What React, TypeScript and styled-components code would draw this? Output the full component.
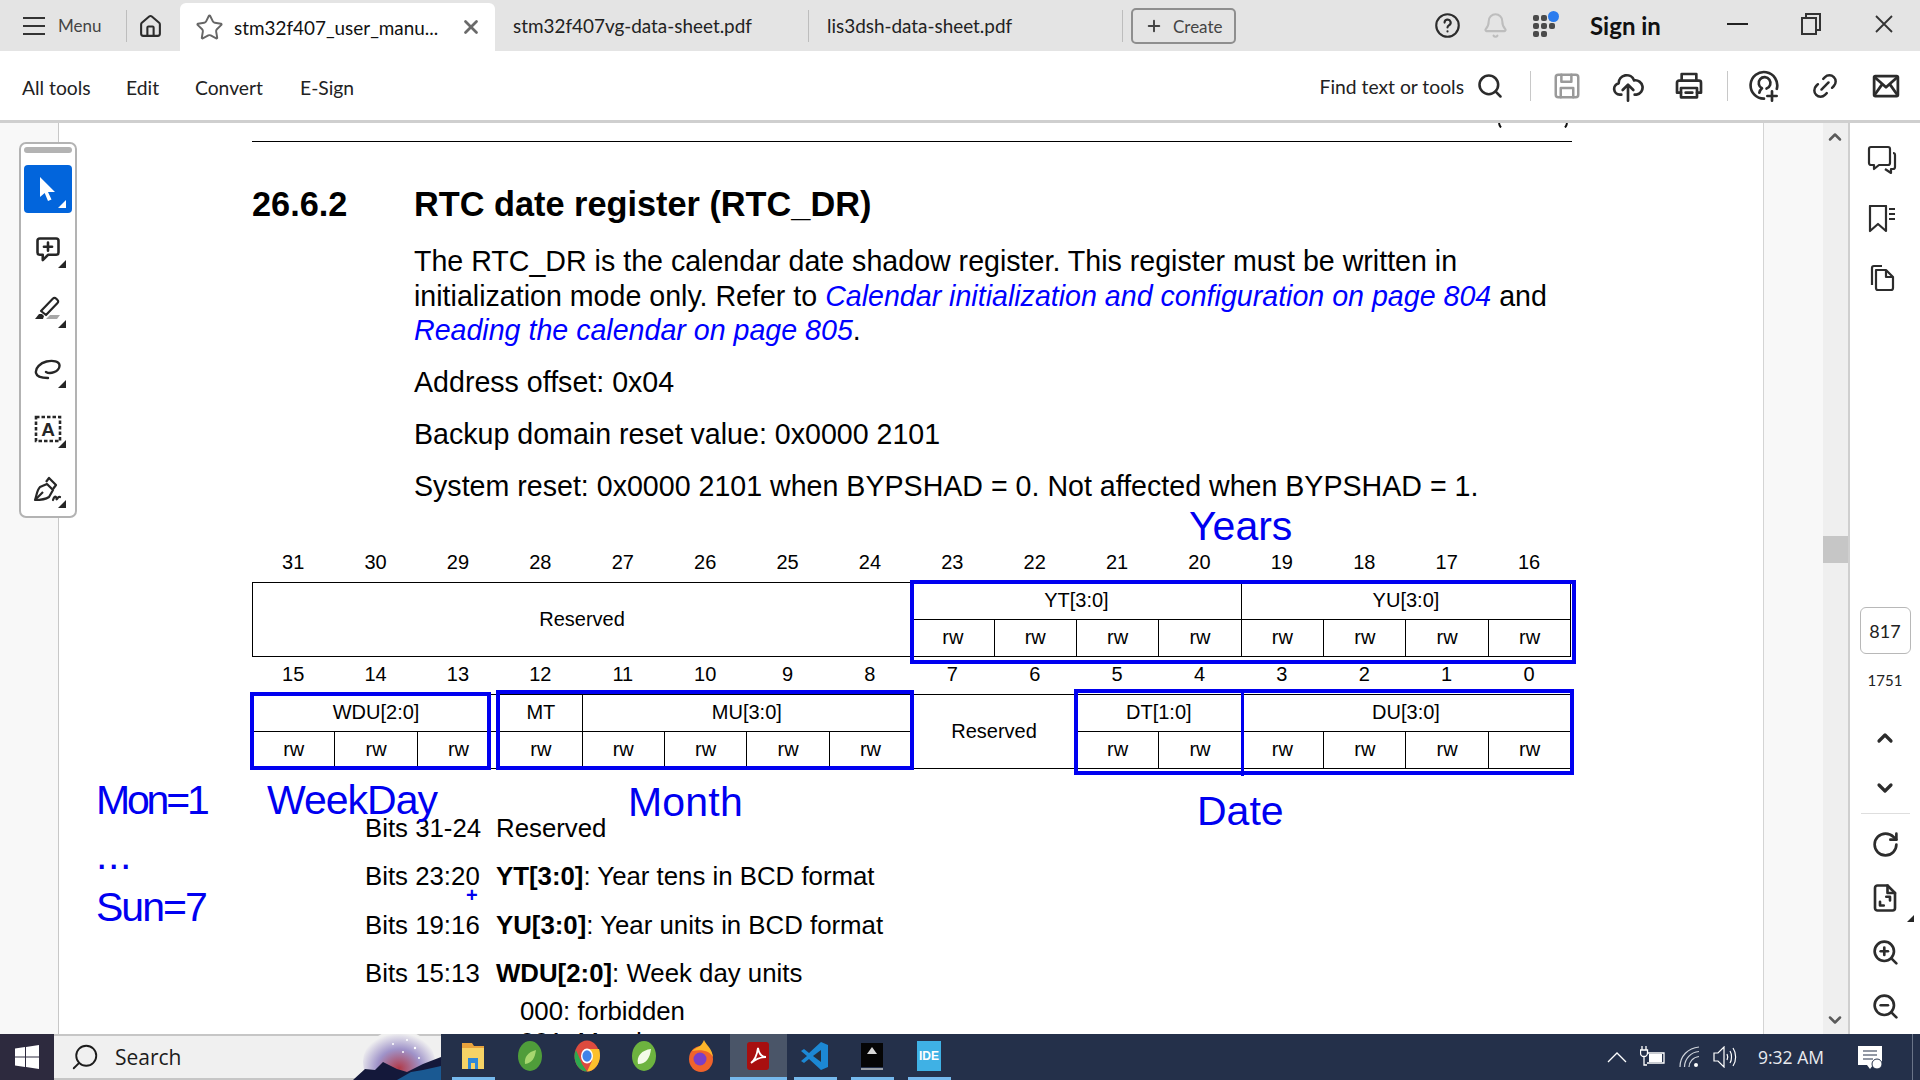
import React from "react";
import styled, { createGlobalStyle } from "styled-components";
import {
  Bell,
  ChevronDown,
  ChevronUp,
  Home,
  Link2,
  Plus,
  RotateCw,
  Search,
  Star,
  X,
  ZoomIn,
  ZoomOut,
} from "lucide-react";

const UI_FONT = `"Lato", "Open Sans", sans-serif`;
const DOC_FONT = `"Liberation Sans", Arial, sans-serif`;
const MARK_BLUE = "#0000f0";

const GlobalStyle = createGlobalStyle`
  html, body { margin: 0; padding: 0; background: #fff; overflow: hidden; }
  * { box-sizing: border-box; }
`;

interface GlyphProps {
  size?: number;
  width?: number;
  children: React.ReactNode;
}

function Glyph({ size = 24, width = 2, children }: GlyphProps) {
  return (
    <svg
      width={size}
      height={size}
      viewBox="0 0 24 24"
      fill="none"
      stroke="currentColor"
      strokeWidth={width}
      strokeLinecap="round"
      strokeLinejoin="round"
    >
      {children}
    </svg>
  );
}

/* ---- registers ---- */

interface Field {
  label: string;
  span: number;
  tall?: boolean;
}

const HIGH_FIELDS: Field[] = [
  { label: "Reserved", span: 8, tall: true },
  { label: "YT[3:0]", span: 4 },
  { label: "YU[3:0]", span: 4 },
];

const LOW_FIELDS: Field[] = [
  { label: "WDU[2:0]", span: 3 },
  { label: "MT", span: 1 },
  { label: "MU[3:0]", span: 4 },
  { label: "Reserved", span: 2, tall: true },
  { label: "DT[1:0]", span: 2 },
  { label: "DU[3:0]", span: 4 },
];

function RegisterRow({ from, fields }: { from: number; fields: Field[] }) {
  const bits = Array.from({ length: 16 }, (_, i) => from - i);
  const cells: React.ReactNode[] = [];
  let col = 1;
  fields.forEach((f) => {
    cells.push(
      <RegCell key={`f${col}`} $col={col} $span={f.span} $row={2} $rows={f.tall ? 2 : 1}>
        {f.label}
      </RegCell>
    );
    if (!f.tall) {
      for (let i = 0; i < f.span; i++) {
        cells.push(
          <RegCell key={`a${col + i}`} $col={col + i} $span={1} $row={3} $rows={1}>
            rw
          </RegCell>
        );
      }
    }
    col += f.span;
  });
  return (
    <RegGrid>
      {bits.map((b) => (
        <BitNumber key={b}>{b}</BitNumber>
      ))}
      {cells}
    </RegGrid>
  );
}

/* ---- app ---- */

export default function App() {
  return (
    <Shell>
      <GlobalStyle />
      <TabBar>
        <MenuButton>
          <Burger>
            <i />
            <i />
            <i />
          </Burger>
          Menu
        </MenuButton>
        <BarDivider />
        <HomeCell>
          <Home size={25} strokeWidth={2} />
        </HomeCell>
        <ActiveTab>
          <Star size={29} strokeWidth={1.6} color="#666" />
          <ActiveTabName>stm32f407_user_manu...</ActiveTabName>
          <X size={22} strokeWidth={3} color="#6a6a6a" />
        </ActiveTab>
        <Tab>stm32f407vg-data-sheet.pdf</Tab>
        <Tab>lis3dsh-data-sheet.pdf</Tab>
        <CreateButton>
          <Plus size={18} strokeWidth={2.6} />
          Create
        </CreateButton>
        <BarRight>
          <BarCell $w={48}>
            <Glyph size={27} width={1.9}>
              <circle cx="12" cy="12" r="10" />
              <path d="M9.4 9.4a2.7 2.7 0 1 1 4 2.4c-.9.5-1.4 1-1.4 2" />
              <path d="M12 17.2v.1" />
            </Glyph>
          </BarCell>
          <BarCell $w={48}>
            <Bell size={27} strokeWidth={1.8} color="#bdbdbd" />
          </BarCell>
          <BarCell $w={50}>
            <AppsIcon />
          </BarCell>
          <SignIn>Sign in</SignIn>
          <WindowButton>
            <MinimizeLine />
          </WindowButton>
          <WindowButton>
            <svg width="20" height="22" viewBox="0 0 20 22" fill="none" stroke="#333" strokeWidth="2">
              <rect x="1" y="5" width="14" height="16" />
              <path d="M5 5V1h14v16h-4" />
            </svg>
          </WindowButton>
          <WindowButton>
            <svg width="20" height="20" viewBox="0 0 20 20" fill="none" stroke="#333" strokeWidth="1.8">
              <path d="M2 2l16 16M18 2L2 18" />
            </svg>
          </WindowButton>
        </BarRight>
      </TabBar>

      <ToolBar>
        <MenuItem $w={104}>All tools</MenuItem>
        <MenuItem $w={69}>Edit</MenuItem>
        <MenuItem $w={105}>Convert</MenuItem>
        <MenuItem $w={80}>E-Sign</MenuItem>
        <ToolBarRight>
          <FindLabel>Find text or tools</FindLabel>
          <FindIcon>
            <Search size={28} strokeWidth={2.2} />
          </FindIcon>
          <ToolDivider />
          <ToolCell>
            <Glyph size={30} width={2}>
              <g stroke="#9a9a9a">
                <rect x="3" y="3" width="18" height="18" rx="2" />
                <path d="M7.5 3v5.500h8V3M7 21v-7.500h10V21" />
              </g>
            </Glyph>
          </ToolCell>
          <ToolCell>
            <Glyph size={32} width={2}>
              <path d="M7 18.500H5.800A4.300 4.300 0 0 1 5 10a6 6 0 0 1 11.600-2.200A5.400 5.400 0 0 1 18.400 18.500H17" />
              <path d="M12 23V11.500M8 15l4-4 4 4" />
            </Glyph>
          </ToolCell>
          <ToolCell>
            <Glyph size={32} width={2}>
              <path d="M6.500 8V3h11v5" />
              <path d="M6 17H3V9.500A1.500 1.500 0 0 1 4.500 8h15A1.500 1.500 0 0 1 21 9.500V17h-3" />
              <rect x="6" y="13.500" width="12" height="7" />
              <path d="M9.500 17h5" />
            </Glyph>
          </ToolCell>
          <ToolDivider $wide />
          <ToolCell>
            <Glyph size={32} width={2}>
              <path d="M12 21.500a10 10 0 1 1 9.600-7.400" />
              <path d="M8.500 17c.3-1.600 1.200-2.600 2-3.300a4.400 4.400 0 1 1 3.400.2" />
              <path d="M18 16v7M14.500 19.500h7" />
            </Glyph>
          </ToolCell>
          <ToolCell>
            <Link2 size={30} strokeWidth={2} style={{ transform: "rotate(-45deg)" }} />
          </ToolCell>
          <ToolCell>
            <Glyph size={30} width={2.2}>
              <rect x="2.500" y="4" width="19" height="16" rx="1" />
              <path d="M3 5l9 8 9-8M3 19l6-8.500M21 19l-6-8.500" />
            </Glyph>
          </ToolCell>
        </ToolBarRight>
      </ToolBar>

      <Workspace>
        <LeftRail />
        <ToolPanel>
          <Grip />
          <ToolButton $active>
            <svg width="24" height="26" viewBox="0 0 24 26" fill="#fff">
              <path d="M4 1l15 15h-7l3.500 7.500-3.500 1.500-3.300-8L4 21z" />
            </svg>
          </ToolButton>
          <ToolButton>
            <Glyph size={28} width={2.2}>
              <path d="M5 3h14a2 2 0 0 1 2 2v10a2 2 0 0 1-2 2h-7l-4.500 4.500V17H5a2 2 0 0 1-2-2V5a2 2 0 0 1 2-2z" />
              <path d="M12 6.500v7M8.500 10h7" />
            </Glyph>
          </ToolButton>
          <ToolButton>
            <svg width="30" height="30" viewBox="0 0 30 30" fill="none" stroke="currentColor" strokeWidth="2.2" strokeLinejoin="round">
              <path d="M8 17L20 4.500a2 2 0 0 1 3 0l1.500 1.500a2 2 0 0 1 0 3L13 21z" />
              <path d="M2 25l4-5 3 0 2 2-1 3z" fill="currentColor" stroke="none" />
              <path d="M13 25l4-4h10l-3 4z" fill="#a8a8a8" stroke="none" />
            </svg>
          </ToolButton>
          <ToolButton>
            <svg width="28" height="22" viewBox="0 0 28 22" fill="none" stroke="currentColor" strokeWidth="2.4" strokeLinecap="round">
              <path d="M12 14c4 2.500 13 0 13.500-6 .4-5-7-6-13-4.500S1 10 2 15c.8 4 7 5 12 5" />
            </svg>
          </ToolButton>
          <ToolButton>
            <svg width="28" height="28" viewBox="0 0 28 28" fill="none">
              <rect x="2" y="2" width="24" height="24" stroke="currentColor" strokeWidth="2.6" strokeDasharray="3.500 2" />
              <TextMark x="14" y="21">A</TextMark>
            </svg>
          </ToolButton>
          <ToolButton>
            <svg width="30" height="28" viewBox="0 0 30 28" fill="none" stroke="currentColor" strokeWidth="2.2" strokeLinejoin="round">
              <path d="M2 25c2-6 2-10 5-13l7-3 6 6-4 7c-3 2-8 3-14 3z" />
              <path d="M13 7l3-4 7 7-3 4" />
              <path d="M3 24l7-7" />
              <path d="M20 25c1-3 2-4 3-3s0 3 1 2 1-3 3-2" strokeLinecap="round" />
            </svg>
          </ToolButton>
        </ToolPanel>

        <PageArea>
          <ClippedParens viewBox="0 0 70 5" fill="none" stroke="#111" strokeWidth="2">
            <path d="M1 0c.3 2 1 3.500 2 4.500M69 0c-.3 2-1 3.500-2 4.500" />
          </ClippedParens>
          <PageRule />
          <SectionHeading>
            <SectionNumber>26.6.2</SectionNumber>
            RTC date register (RTC_DR)
          </SectionHeading>
          <BodyBlock>
            <Para>
              The RTC_DR is the calendar date shadow register. This register must be written in
              <br />
              initialization mode only. Refer to{" "}
              <DocLink>Calendar initialization and configuration on page 804</DocLink> and
              <br />
              <DocLink>Reading the calendar on page 805</DocLink>.
            </Para>
            <Para>Address offset: 0x04</Para>
            <Para>Backup domain reset value: 0x0000 2101</Para>
            <Para>System reset: 0x0000 2101 when BYPSHAD = 0. Not affected when BYPSHAD = 1.</Para>
          </BodyBlock>

          <Register>
            <RegisterRow from={31} fields={HIGH_FIELDS} />
            <RegisterRow from={15} fields={LOW_FIELDS} />
          </Register>

          <BitList>
            <BitRow>
              <BitRange>Bits 31-24</BitRange>
              <span>Reserved</span>
            </BitRow>
            <BitRow>
              <BitRange>Bits 23:20</BitRange>
              <span>
                <b>YT[3:0]</b>: Year tens in BCD format
              </span>
            </BitRow>
            <BitRow>
              <BitRange>Bits 19:16</BitRange>
              <span>
                <b>YU[3:0]</b>: Year units in BCD format
              </span>
            </BitRow>
            <BitRow $tight>
              <BitRange>Bits 15:13</BitRange>
              <span>
                <b>WDU[2:0]</b>: Week day units
              </span>
            </BitRow>
            <BitValue>000: forbidden</BitValue>
            <BitValue>001: Monday</BitValue>
          </BitList>

          {/* pen marks drawn over the page */}
          <MarkBox $x={851} $y={457} $w={666} $h={84} />
          <MarkBox $x={191} $y={569} $w={241} $h={78} />
          <MarkBox $x={437} $y={567} $w={418} $h={80} />
          <MarkBox $x={1015} $y={566} $w={500} $h={86} />
          <MarkStroke $x={1182} $y={568} $h={85} />
          <MarkText $x={1130} $y={378} $gap={0}>Years</MarkText>
          <MarkText $x={208} $y={652} $gap={-1}>WeekDay</MarkText>
          <MarkText $x={569} $y={654} $gap={0.2}>Month</MarkText>
          <MarkText $x={1138} $y={663} $gap={0}>Date</MarkText>
          <MarkText $x={37} $y={652} $gap={-3.2}>Mon=1</MarkText>
          <MarkText $x={37} $y={707} $gap={0.6}>...</MarkText>
          <MarkText $x={37} $y={759} $gap={-2}>Sun=7</MarkText>
          <MarkPlus>+</MarkPlus>
        </PageArea>

        <PageMargin />

        <ScrollTrack>
          <ScrollArrow>
            <ChevronUp size={20} strokeWidth={3} />
          </ScrollArrow>
          <ScrollThumb />
          <ScrollArrow>
            <ChevronDown size={20} strokeWidth={3} />
          </ScrollArrow>
        </ScrollTrack>

        <SidePanel>
          <SideTabs>
            <SideIcon $h={59}>
              <svg width="30" height="30" viewBox="0 0 30 30" fill="none" stroke="currentColor" strokeWidth="2.200" strokeLinejoin="round">
                <path d="M4 2h17a2 2 0 0 1 2 2v14a2 2 0 0 1-2 2h-9l-5 4v-4H4a2 2 0 0 1-2-2V4a2 2 0 0 1 2-2z" />
                <path d="M26 8a2 2 0 0 1 2 2v12a2 2 0 0 1-2 2h-2v4l-6-4" />
              </svg>
            </SideIcon>
            <SideIcon $h={59}>
              <svg width="28" height="28" viewBox="0 0 28 28" fill="none" stroke="currentColor" strokeWidth="2.200" strokeLinejoin="round">
                <path d="M2 1h16v25l-8-7-8 7z" />
                <path d="M21 4h6M21 9h6M21 14h6" />
              </svg>
            </SideIcon>
            <SideIcon $h={59}>
              <svg width="28" height="28" viewBox="0 0 28 28" fill="none" stroke="currentColor" strokeWidth="2.200" strokeLinejoin="round">
                <path d="M8 6h10l7 7v11a2 2 0 0 1-2 2H10a2 2 0 0 1-2-2z" />
                <path d="M18 6v7h7" />
                <path d="M4 21V4a2 2 0 0 1 2-2h8" />
              </svg>
            </SideIcon>
          </SideTabs>
          <PageBox>817</PageBox>
          <PageTotal>1751</PageTotal>
          <SideIcon $h={50}>
            <ChevronUp size={24} strokeWidth={3.2} />
          </SideIcon>
          <SideIcon $h={50}>
            <ChevronDown size={24} strokeWidth={3.2} />
          </SideIcon>
          <SideRule />
          <SideIcon $h={54}>
            <RotateCw size={29} strokeWidth={2.2} />
          </SideIcon>
          <SideIcon $h={54}>
            <Glyph size={30} width={2.1}>
              <path d="M5 4a2 2 0 0 1 2-2h8l6 6v12a2 2 0 0 1-2 2H7a2 2 0 0 1-2-2z" transform="translate(-1 0)" />
              <path d="M14 2v6h6M13 11h3v3M11 18H8v-3" />
            </Glyph>
            <Flyout />
          </SideIcon>
          <SideIcon $h={54}>
            <ZoomIn size={29} strokeWidth={2.2} />
          </SideIcon>
          <SideIcon $h={54}>
            <ZoomOut size={29} strokeWidth={2.2} />
          </SideIcon>
        </SidePanel>
      </Workspace>

      <TaskBar>
        <StartButton>
          <svg width="24" height="24" viewBox="0 0 24 24" fill="#fff">
            <path d="M0 3.500l10-1.400v9.300H0zM11 2l13-2v11.400H11zM0 12.500h10v9.400L0 20.500zM11 12.500h13V24l-13-1.900z" />
          </svg>
        </StartButton>
        <SearchBox>
          <Search size={30} strokeWidth={1.5} style={{ transform: "scaleX(-1)" }} />
          <SearchLabel>Search</SearchLabel>
          <SearchArt />
        </SearchBox>
        <TaskApp $running>
          <svg width="26" height="30" viewBox="0 0 26 30">
            <path d="M2 2h10l2 3h10v4H2z" fill="#e8a33d" />
            <path d="M2 7h22v21H2z" fill="#f6d365" />
            <path d="M8 17h10v11h-3v-6h-4v6H8z" fill="#2f88d8" />
          </svg>
        </TaskApp>
        <TaskApp>
          <svg width="26" height="32" viewBox="0 0 26 32">
            <ellipse cx="13" cy="16" rx="12" ry="15" fill="#4f9d3a" />
            <path d="M8 24c-1-7 3-12 11-14-1 8-4 13-11 14z" fill="#a7d76f" />
          </svg>
        </TaskApp>
        <TaskApp>
          <ChromeIcon />
        </TaskApp>
        <TaskApp>
          <svg width="26" height="32" viewBox="0 0 26 32">
            <ellipse cx="13" cy="16" rx="12" ry="15" fill="#6db33f" />
            <path d="M7 24c-2-8 4-14 13-15-1 9-5 15-13 15z" fill="#f4fbe8" />
          </svg>
        </TaskApp>
        <TaskApp>
          <svg width="26" height="34" viewBox="0 0 26 34">
            <ellipse cx="13" cy="20" rx="12" ry="13" fill="#f0632b" />
            <path d="M4 12C8 8 13 9 16 1c2 5 8 8 9 17-3-5-9-8-21-6z" fill="#fcb52a" />
            <circle cx="12" cy="20" r="6.500" fill="#7a3fc8" />
          </svg>
        </TaskApp>
        <TaskApp $running $active>
          <svg width="24" height="30" viewBox="0 0 24 30">
            <rect x="1" y="1" width="22" height="28" rx="3" fill="#a80f0f" />
            <path d="M5 22c4-3 6-8 7-15 1 6 3 9 8 9-5 0-10 2-15 6z" fill="none" stroke="#fff" strokeWidth="1.800" />
          </svg>
        </TaskApp>
        <TaskApp $running>
          <svg width="28" height="30" viewBox="0 0 28 30">
            <path d="M20 1l7 3v22l-7 3-12-11-5 4-3-2 6-5-6-5 3-2 5 4z" fill="#1c88d4" />
            <path d="M20 9v12l-8-6z" fill="#24303f" />
          </svg>
        </TaskApp>
        <TaskApp $running>
          <svg width="26" height="30" viewBox="0 0 26 30">
            <rect x="2" y="2" width="22" height="24" fill="#050505" />
            <path d="M13 6l5 7H8z" fill="#d8d8d8" />
            <rect x="2" y="27" width="22" height="2" fill="#9aa0a8" />
          </svg>
        </TaskApp>
        <TaskApp $running>
          <IdeTile>IDE</IdeTile>
        </TaskApp>
        <Tray>
          <TrayCell $w={34}>
            <svg width="20" height="12" viewBox="0 0 20 12" fill="none" stroke="#fff" strokeWidth="1.300">
              <path d="M1 11l9-9 9 9" />
            </svg>
          </TrayCell>
          <TrayCell $w={38}>
            <svg width="26" height="24" viewBox="0 0 26 24" fill="none" stroke="#fff" strokeWidth="1.300">
              <path d="M2 1v4M6 1v4M0.500 5h7v3a3.500 3.500 0 0 1-7 0zM4 11.500V20h3" />
              <path d="M8 8h16v10H7" />
              <rect x="9" y="9" width="13" height="8" fill="#fff" stroke="none" />
            </svg>
          </TrayCell>
          <TrayCell $w={36}>
            <svg width="22" height="22" viewBox="0 0 22 22" fill="none" stroke="#cfd4dc" strokeWidth="1.200">
              <path d="M1 21C1 10 9 2 20 1M5.500 21C5.500 13 12 6 20 5.500M10 21c0-5 4-10 10-10.500" />
              <circle cx="17" cy="19" r="2" fill="#fff" stroke="none" />
            </svg>
          </TrayCell>
          <TrayCell $w={34}>
            <svg width="24" height="22" viewBox="0 0 24 22" fill="none" stroke="#fff" strokeWidth="1.200">
              <path d="M1 7h4l6-6v20l-6-6H1z" />
              <path d="M14 8c1 2 1 4 0 6M17 5c2 3 2 9 0 12M20 2c3.500 5 3.500 13 0 18" />
            </svg>
          </TrayCell>
          <Clock>9:32 AM</Clock>
          <TrayCell $w={26}>
            <svg width="25" height="25" viewBox="0 0 25 25">
              <path d="M0 1h24v19h-9l-3 4-3-4H0z" fill="#fff" />
              <path d="M5 6h14M5 10h14M5 14h10" stroke="#26324a" strokeWidth="1.100" />
              <circle cx="19" cy="19" r="5" fill="#fff" stroke="#26324a" strokeWidth="1" />
            </svg>
          </TrayCell>
          <ShowDesktop />
        </Tray>
      </TaskBar>
    </Shell>
  );
}

function AppsIcon() {
  return (
    <AppsWrap>
      {Array.from({ length: 8 }, (_, i) => (
        <AppsDot key={i} />
      ))}
      <AppsBadge />
    </AppsWrap>
  );
}

function ChromeIcon() {
  return (
    <svg width="26" height="32" viewBox="0 0 26 32">
      <ellipse cx="13" cy="16" rx="12.500" ry="15.500" fill="#dd4b3e" />
      <path d="M2 10l6 14 5 7.500C6 31.500.5 24 .5 16c0-2 .5-4 1.500-6z" fill="#2da94f" />
      <path d="M13 9h12c.8 2 1 4.500 1 7 0 8-6 15.500-13 15.500L18 21z" fill="#fbc02d" />
      <ellipse cx="13" cy="16" rx="6" ry="7.500" fill="#fff" />
      <ellipse cx="13" cy="16" rx="4.600" ry="5.800" fill="#3f83e8" />
    </svg>
  );
}

function SearchArt() {
  return (
    <ArtFrame viewBox="0 0 88 46" preserveAspectRatio="none">
      <defs>
        <radialGradient id="glow" cx="50%" cy="60%" r="55%">
          <stop offset="0%" stopColor="#b23a48" />
          <stop offset="55%" stopColor="#9f93c9" />
          <stop offset="100%" stopColor="#f0f0f0" />
        </radialGradient>
      </defs>
      <ellipse cx="46" cy="28" rx="36" ry="32" fill="url(#glow)" />
      <path d="M0 46l12-11 10 1 8-8 14 7 10 3 16-8 18-7v23z" fill="#14183a" />
      <path d="M44 46l14-8 12-2 18-4v14z" fill="#1c6fb0" opacity="0.75" />
      <g fill="#fff">
        <circle cx="40" cy="10" r="1" />
        <circle cx="54" cy="6" r="1" />
        <circle cx="62" cy="14" r="1.200" />
        <circle cx="50" cy="18" r="1" />
        <circle cx="66" cy="24" r="1" />
      </g>
    </ArtFrame>
  );
}

/* ---- page frame ---- */

const Shell = styled.div`
  position: relative;
  display: flex;
  flex-direction: column;
  width: 1920px;
  height: 1080px;
  overflow: hidden;
  font-family: ${UI_FONT};
  color: #2c2c2c;
`;

const TabBar = styled.div`
  display: flex;
  align-items: stretch;
  height: 51px;
  background: #e4e4e4;
  flex: none;
`;

const MenuButton = styled.div`
  display: flex;
  align-items: center;
  gap: 13px;
  width: 126px;
  padding-left: 23px;
  font-size: 17px;
  color: #444;
`;

const Burger = styled.span`
  display: flex;
  flex-direction: column;
  gap: 6px;
  width: 22px;

  i {
    height: 2px;
    background: #333;
  }
`;

const BarDivider = styled.div`
  width: 1px;
  height: 32px;
  margin-top: 10px;
  background: #bdbdbd;
`;

const HomeCell = styled.div`
  display: flex;
  align-items: center;
  justify-content: center;
  width: 47px;
  margin: 1px 6px 0 0;
`;

const ActiveTab = styled.div`
  display: flex;
  align-items: center;
  width: 315px;
  margin-top: 3px;
  padding: 0 13px 0 15px;
  background: #fff;
  border-radius: 6px 6px 0 0;
`;

const ActiveTabName = styled.span`
  flex: 1;
  margin-left: 10px;
  font-size: 18.9px;
  color: #111;
`;

const Tab = styled.div`
  display: flex;
  align-items: center;
  width: 314px;
  padding-left: 18px;
  font-size: 18.9px;
  color: #222;
  position: relative;

  &::after {
    content: "";
    position: absolute;
    right: 0;
    top: 10px;
    bottom: 9px;
    width: 1px;
    background: #bdbdbd;
  }
`;

const CreateButton = styled.div`
  display: flex;
  align-items: center;
  gap: 10px;
  width: 105px;
  height: 36px;
  margin: 8px 0 0 8px;
  padding-left: 12px;
  border: 2px solid #8e8e8e;
  border-radius: 5px;
  font-size: 17px;
  color: #444;
`;

const BarRight = styled.div`
  display: flex;
  align-items: center;
  margin-left: auto;
`;

const BarCell = styled.div<{ $w: number }>`
  display: flex;
  align-items: center;
  justify-content: center;
  width: ${(p) => p.$w}px;
`;

const SignIn = styled.div`
  width: 111px;
  margin-left: 21px;
  font-size: 24px;
  font-weight: 700;
  color: #111;
`;

const WindowButton = styled.div`
  display: flex;
  align-items: center;
  justify-content: center;
  width: 73px;
  height: 48px;
  margin-bottom: 4px;
`;

const MinimizeLine = styled.span`
  display: block;
  width: 21px;
  height: 2px;
  background: #222;
`;

const AppsWrap = styled.div`
  position: relative;
  display: grid;
  grid-template-columns: repeat(3, 6px);
  gap: 2px;
  width: 22px;
`;

const AppsDot = styled.i`
  width: 6px;
  height: 6px;
  border-radius: 2px;
  background: #4b4b4b;
`;

const AppsBadge = styled.span`
  position: absolute;
  top: -4px;
  right: -4px;
  width: 11px;
  height: 11px;
  border-radius: 50%;
  background: #2b7cee;
`;

const ToolBar = styled.div`
  display: flex;
  align-items: center;
  height: 72px;
  padding: 0 4px 0 22px;
  border-bottom: 3px solid #cfcfcf;
  background: #fff;
  flex: none;
`;

const MenuItem = styled.div<{ $w: number }>`
  width: ${(p) => p.$w}px;
  margin-top: 3px;
  font-size: 19.3px;
  color: #222;
`;

const ToolBarRight = styled.div`
  display: flex;
  align-items: center;
  margin-left: auto;
`;

const FindLabel = styled.div`
  margin-top: 1px;
  font-size: 19.3px;
  color: #222;
`;

const FindIcon = styled.div`
  display: flex;
  justify-content: center;
  width: 42px;
  margin: 0 19px 0 5px;
`;

const ToolDivider = styled.div<{ $wide?: boolean }>`
  width: 1px;
  height: 30px;
  margin: ${(p) => (p.$wide ? "0 5px 0 8px" : "0 5px 0 0")};
  background: #c8c8c8;
`;

const ToolCell = styled.div`
  display: flex;
  align-items: center;
  justify-content: center;
  width: 61px;
`;

/* ---- workspace ---- */

const Workspace = styled.div`
  position: relative;
  display: flex;
  flex: 1;
  min-height: 0;
`;

const LeftRail = styled.div`
  width: 59px;
  background: #f8f8f8;
  border-right: 1px solid #c8c8c8;
  flex: none;
`;

const ToolPanel = styled.div`
  position: absolute;
  z-index: 3;
  left: 19px;
  top: 19px;
  display: flex;
  flex-direction: column;
  align-items: center;
  gap: 12px;
  width: 58px;
  height: 376px;
  padding-top: 3px;
  background: #fff;
  border: 2px solid #b3b3b3;
  border-radius: 7px;
`;

const Grip = styled.div`
  width: 48px;
  height: 6px;
  border-radius: 3px;
  background: #b3b3b3;
`;

const ToolButton = styled.div<{ $active?: boolean }>`
  position: relative;
  display: flex;
  align-items: center;
  justify-content: center;
  width: 48px;
  height: 48px;
  flex: none;
  border-radius: 4px;
  background: ${(p) => (p.$active ? "#0265dc" : "transparent")};
  color: #262626;

  &::after {
    content: "";
    position: absolute;
    right: 6px;
    bottom: 5px;
    border-style: solid;
    border-width: 0 0 8px 8px;
    border-color: transparent transparent ${(p) => (p.$active ? "#fff" : "#262626")} transparent;
  }
`;

const TextMark = styled.text`
  font-family: ${DOC_FONT};
  font-size: 19px;
  font-weight: 700;
  text-anchor: middle;
  fill: #262626;
`;

const Flyout = styled.span`
  position: absolute;
  right: 6px;
  bottom: 3px;
  border-style: solid;
  border-width: 0 0 7px 7px;
  border-color: transparent transparent #262626 transparent;
`;

const PageArea = styled.div`
  position: relative;
  flex: 1;
  min-width: 0;
  overflow: hidden;
  background: #fff;
  padding: 18px 0 0 193px;
  font-family: ${DOC_FONT};
  color: #000;
`;

const ClippedParens = styled.svg`
  position: absolute;
  left: 1439px;
  top: 0;
  width: 70px;
  height: 5px;
`;

const PageRule = styled.div`
  width: 1320px;
  height: 1px;
  background: #000;
`;

const SectionHeading = styled.h2`
  display: flex;
  margin: 42px 0 0;
  font-size: 34.3px;
  line-height: 40px;
  font-weight: 700;
`;

const SectionNumber = styled.span`
  width: 162px;
`;

const BodyBlock = styled.div`
  display: flex;
  flex-direction: column;
  gap: 17.5px;
  margin: 20px 0 0 162px;
`;

const Para = styled.p`
  margin: 0;
  font-size: 28.6px;
  line-height: 34.5px;
  white-space: nowrap;
`;

const DocLink = styled.i`
  color: #0000ff;
`;

const Register = styled.div`
  width: 1320px;
  margin-top: 40px;
`;

const RegGrid = styled.div`
  display: grid;
  grid-template-columns: repeat(16, 82.4px);
  grid-template-rows: 38px 37px 37px;
  font-size: 20px;
`;

const BitNumber = styled.div`
  display: flex;
  align-items: center;
  justify-content: center;
  grid-row: 1;
`;

const RegCell = styled.div<{ $col: number; $span: number; $row: number; $rows: number }>`
  display: flex;
  align-items: center;
  justify-content: center;
  grid-column: ${(p) => p.$col} / span ${(p) => p.$span};
  grid-row: ${(p) => p.$row} / span ${(p) => p.$rows};
  margin: 0 -1px -1px 0;
  border: 1px solid #000;
`;

const BitList = styled.div`
  margin-top: 45px;
  margin-left: 113px;
  font-size: 25.8px;
  line-height: 31px;
`;

const BitRow = styled.div<{ $tight?: boolean }>`
  display: flex;
  margin-bottom: ${(p) => (p.$tight ? 7 : 17.5)}px;
  white-space: nowrap;
`;

const BitRange = styled.span`
  width: 131px;
`;

const BitValue = styled.div`
  margin-left: 155px;
`;

const MarkBox = styled.div<{ $x: number; $y: number; $w: number; $h: number }>`
  position: absolute;
  left: ${(p) => p.$x}px;
  top: ${(p) => p.$y}px;
  width: ${(p) => p.$w}px;
  height: ${(p) => p.$h}px;
  border: 4px solid ${MARK_BLUE};
`;

const MarkStroke = styled.div<{ $x: number; $y: number; $h: number }>`
  position: absolute;
  left: ${(p) => p.$x}px;
  top: ${(p) => p.$y}px;
  width: 3px;
  height: ${(p) => p.$h}px;
  background: ${MARK_BLUE};
`;

const MarkText = styled.div<{ $x: number; $y: number; $gap: number }>`
  position: absolute;
  left: ${(p) => p.$x}px;
  top: ${(p) => p.$y}px;
  font-size: 41px;
  line-height: 50px;
  letter-spacing: ${(p) => p.$gap}px;
  color: ${MARK_BLUE};
  white-space: nowrap;
`;

const MarkPlus = styled.div`
  position: absolute;
  left: 407px;
  top: 762px;
  font-size: 20px;
  line-height: 20px;
  font-weight: 700;
  color: ${MARK_BLUE};
`;

const PageMargin = styled.div`
  width: 60px;
  background: #f8f8f8;
  border-left: 1px solid #d4d4d4;
  flex: none;
`;

const ScrollTrack = styled.div`
  position: relative;
  display: flex;
  flex-direction: column;
  justify-content: space-between;
  width: 27px;
  padding: 4px 2px 4px 0;
  background: #efefef;
  border-right: 2px solid #cfcfcf;
  flex: none;
`;

const ScrollArrow = styled.div`
  display: flex;
  justify-content: center;
  color: #5a5a5a;
`;

const ScrollThumb = styled.div`
  position: absolute;
  left: 0;
  top: 413px;
  width: 25px;
  height: 27px;
  background: #c6c6c6;
`;

const SidePanel = styled.div`
  display: flex;
  flex-direction: column;
  align-items: center;
  width: 70px;
  flex: none;
  background: #fff;
  color: #2c2c2c;
`;

const SideTabs = styled.div`
  width: 100%;
  padding: 7px 6px 0 0;
  margin-bottom: 300px;
`;

const SideIcon = styled.div<{ $h: number }>`
  position: relative;
  display: flex;
  align-items: center;
  justify-content: center;
  width: 100%;
  height: ${(p) => p.$h}px;
  flex: none;
`;

const PageBox = styled.div`
  display: flex;
  align-items: center;
  justify-content: center;
  width: 51px;
  height: 47px;
  border: 1px solid #b8b8b8;
  border-radius: 6px;
  font-size: 18px;
  color: #222;
  flex: none;
`;

const PageTotal = styled.div`
  height: 59px;
  padding-top: 17px;
  font-size: 15px;
  color: #222;
  flex: none;
`;

const SideRule = styled.div`
  width: 49px;
  height: 1px;
  margin: 0 0 3px 0;
  background: #dedede;
  flex: none;
`;

/* ---- task bar ---- */

const TaskBar = styled.div`
  display: flex;
  align-items: stretch;
  height: 46px;
  background: #24304a;
  flex: none;
`;

const StartButton = styled.div`
  display: flex;
  align-items: center;
  justify-content: center;
  width: 54px;
  background: #2d2a3e;
`;

const SearchBox = styled.div`
  display: flex;
  align-items: center;
  width: 387px;
  padding-left: 16px;
  background: #f0f0f0;
  border-top: 2px solid #c6c6c6;
  border-bottom: 2px solid #c6c6c6;
  color: #1c1c1c;
  margin-right: 3.5px;
`;

const SearchLabel = styled.span`
  margin-left: 15px;
  font-family: "Open Sans", sans-serif;
  font-size: 21px;
`;

const ArtFrame = styled.svg`
  width: 88px;
  height: 46px;
  margin: -2px 0 -2px auto;
`;

const TaskApp = styled.div<{ $running?: boolean; $active?: boolean }>`
  position: relative;
  display: flex;
  align-items: center;
  justify-content: center;
  width: 57px;
  padding-bottom: 3px;
  background: ${(p) => (p.$active ? "#4a5568" : "transparent")};

  &::after {
    content: "";
    display: ${(p) => (p.$running ? "block" : "none")};
    position: absolute;
    left: ${(p) => (p.$active ? 0 : 7)}px;
    right: ${(p) => (p.$active ? 0 : 7)}px;
    bottom: 0;
    height: 3px;
    background: #76b9ed;
  }
`;

const IdeTile = styled.div`
  display: flex;
  align-items: center;
  justify-content: center;
  width: 24px;
  height: 30px;
  background: #3fb1e5;
  color: #fff;
  font-family: ${DOC_FONT};
  font-size: 12px;
  font-weight: 700;
`;

const Tray = styled.div`
  display: flex;
  align-items: center;
  margin-left: auto;
  color: #fff;
`;

const TrayCell = styled.div<{ $w: number }>`
  display: flex;
  align-items: center;
  justify-content: center;
  width: ${(p) => p.$w}px;
`;

const Clock = styled.div`
  width: 115px;
  padding-left: 16px;
  font-family: "Open Sans", sans-serif;
  font-size: 17.5px;
  color: #e8eaee;
`;

const ShowDesktop = styled.div`
  width: 1px;
  height: 100%;
  margin: 0 7px 0 29px;
  background: #6a7488;
`;
